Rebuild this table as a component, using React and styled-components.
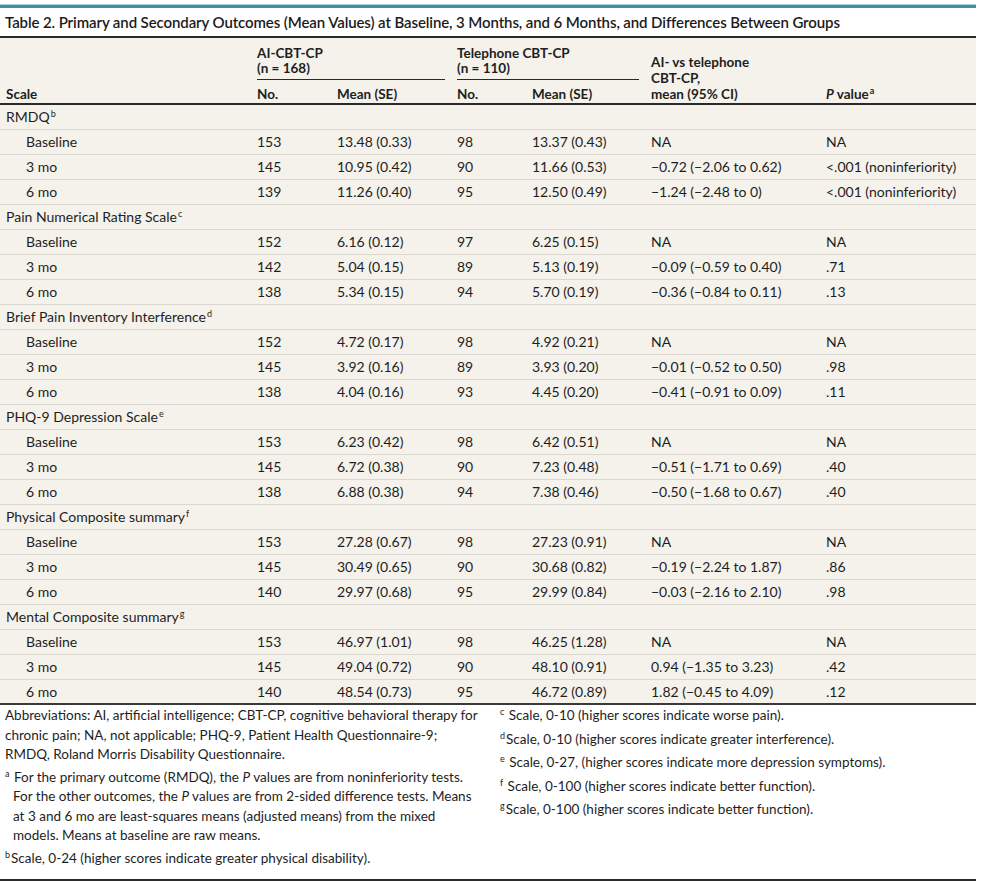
import React from "react";
import styled, { createGlobalStyle } from "styled-components";

const GlobalStyle = createGlobalStyle`
  body {
    margin: 0;
    background: #ffffff;
    font-family: Lato, "Open Sans", sans-serif;
    color: #1e1e1e;
  }
`;

const Page = styled.div`
  width: 976px;
  padding-top: 4px;
`;

const TopRule = styled.div`
  height: 3px;
  background: #3f8fa9;
  border-top: 1px solid #a8d3e0;
`;

const Title = styled.h2`
  margin: 0;
  padding: 5px 5px 0;
  height: 23px;
  font-size: 15px;
  font-weight: 600;
  letter-spacing: -0.1px;
  color: #1b1b1b;
  border-bottom: 2px solid #2a2a2a;
`;

const Table = styled.table`
  width: 976px;
  border-collapse: collapse;
  table-layout: fixed;
  background: #f4f2eb;
  font-size: 14px;
`;

const HeadCell = styled.th`
  text-align: left;
  vertical-align: bottom;
  font-weight: 700;
  font-size: 13.5px;
  line-height: 16px;
  padding: 0 6px 1px;
  color: #1e1e1e;
`;

const SpanHead = styled(HeadCell)`
  padding: 8px 0 0 6px;
  vertical-align: top;
  line-height: 15px;
  & > div {
    border-bottom: 1px solid #2a2a2a;
    padding-bottom: 3px;
    width: ${(p) => p.$line}px;
  }
`;

const HeadRow = styled.tr`
  height: ${(p) => p.$h}px;
  border-bottom: ${(p) => (p.$last ? "2px solid #2a2a2a" : "none")};
`;

const Row = styled.tr`
  height: 25px;
  border-bottom: ${(p) => (p.$last ? "2px solid #3a3a3a" : "1px solid #d9d7d0")};
`;

const Cell = styled.td`
  padding: 0 6px;
  padding-left: ${(p) => (p.$indent ? "26px" : "6px")};
  white-space: nowrap;
  color: #1e1e1e;
`;

const Sup = styled.sup`
  font-size: 9px;
  line-height: 0;
  vertical-align: 5px;
  margin-left: 1px;
`;

const Notes = styled.div`
  display: grid;
  grid-template-columns: 495px 1fr;
  padding: 1px 5px 0;
  height: 173px;
  border-bottom: 2px solid #2a2a2a;
  font-size: 13.5px;
  line-height: 19.5px;
  color: #1e1e1e;
`;

const NoteCol = styled.div`
  display: flex;
  flex-direction: column;
  gap: ${(p) => p.$gap}px;
`;

const Note = styled.p`
  margin: 0;
  white-space: nowrap;
  padding-left: ${(p) => (p.$hang ? "8px" : "0")};
  text-indent: ${(p) => (p.$hang ? "-8px" : "0")};
`;

const NoteMark = styled.sup`
  font-size: 9px;
  line-height: 0;
  vertical-align: 5px;
  margin-right: 1px;
`;

const groups = [
  {
    name: "RMDQ",
    sup: "b",
    rows: [
      ["Baseline", "153", "13.48 (0.33)", "98", "13.37 (0.43)", "NA", "NA"],
      ["3 mo", "145", "10.95 (0.42)", "90", "11.66 (0.53)", "−0.72 (−2.06 to 0.62)", "<.001 (noninferiority)"],
      ["6 mo", "139", "11.26 (0.40)", "95", "12.50 (0.49)", "−1.24 (−2.48 to 0)", "<.001 (noninferiority)"],
    ],
  },
  {
    name: "Pain Numerical Rating Scale",
    sup: "c",
    rows: [
      ["Baseline", "152", "6.16 (0.12)", "97", "6.25 (0.15)", "NA", "NA"],
      ["3 mo", "142", "5.04 (0.15)", "89", "5.13 (0.19)", "−0.09 (−0.59 to 0.40)", ".71"],
      ["6 mo", "138", "5.34 (0.15)", "94", "5.70 (0.19)", "−0.36 (−0.84 to 0.11)", ".13"],
    ],
  },
  {
    name: "Brief Pain Inventory Interference",
    sup: "d",
    rows: [
      ["Baseline", "152", "4.72 (0.17)", "98", "4.92 (0.21)", "NA", "NA"],
      ["3 mo", "145", "3.92 (0.16)", "89", "3.93 (0.20)", "−0.01 (−0.52 to 0.50)", ".98"],
      ["6 mo", "138", "4.04 (0.16)", "93", "4.45 (0.20)", "−0.41 (−0.91 to 0.09)", ".11"],
    ],
  },
  {
    name: "PHQ-9 Depression Scale",
    sup: "e",
    rows: [
      ["Baseline", "153", "6.23 (0.42)", "98", "6.42 (0.51)", "NA", "NA"],
      ["3 mo", "145", "6.72 (0.38)", "90", "7.23 (0.48)", "−0.51 (−1.71 to 0.69)", ".40"],
      ["6 mo", "138", "6.88 (0.38)", "94", "7.38 (0.46)", "−0.50 (−1.68 to 0.67)", ".40"],
    ],
  },
  {
    name: "Physical Composite summary",
    sup: "f",
    rows: [
      ["Baseline", "153", "27.28 (0.67)", "98", "27.23 (0.91)", "NA", "NA"],
      ["3 mo", "145", "30.49 (0.65)", "90", "30.68 (0.82)", "−0.19 (−2.24 to 1.87)", ".86"],
      ["6 mo", "140", "29.97 (0.68)", "95", "29.99 (0.84)", "−0.03 (−2.16 to 2.10)", ".98"],
    ],
  },
  {
    name: "Mental Composite summary",
    sup: "g",
    rows: [
      ["Baseline", "153", "46.97 (1.01)", "98", "46.25 (1.28)", "NA", "NA"],
      ["3 mo", "145", "49.04 (0.72)", "90", "48.10 (0.91)", "0.94 (−1.35 to 3.23)", ".42"],
      ["6 mo", "140", "48.54 (0.73)", "95", "46.72 (0.89)", "1.82 (−0.45 to 4.09)", ".12"],
    ],
  },
];

const widths = [251, 80, 120, 75, 119, 175, 156];

export default function App() {
  return (
    <Page>
      <GlobalStyle />
      <TopRule />
      <Title>
        Table 2. Primary and Secondary Outcomes (Mean Values) at Baseline, 3 Months, and 6 Months, and Differences Between Groups
      </Title>
      <Table>
        <colgroup>
          {widths.map((w, i) => (
            <col key={i} style={{ width: w }} />
          ))}
        </colgroup>
        <thead>
          <HeadRow $h={45}>
            <HeadCell rowSpan={2}>Scale</HeadCell>
            <SpanHead colSpan={2} $line={188}>
              <div>
                AI-CBT-CP
                <br />
                (n = 168)
              </div>
            </SpanHead>
            <SpanHead colSpan={2} $line={182}>
              <div>
                Telephone CBT-CP
                <br />
                (n = 110)
              </div>
            </SpanHead>
            <HeadCell rowSpan={2}>
              AI- vs telephone
              <br />
              CBT-CP,
              <br />
              mean (95% CI)
            </HeadCell>
            <HeadCell rowSpan={2}>
              <i>P</i> value<Sup>a</Sup>
            </HeadCell>
          </HeadRow>
          <HeadRow $h={21} $last>
            <HeadCell>No.</HeadCell>
            <HeadCell>Mean (SE)</HeadCell>
            <HeadCell>No.</HeadCell>
            <HeadCell>Mean (SE)</HeadCell>
          </HeadRow>
        </thead>
        <tbody>
          {groups.map((g, gi) => (
            <React.Fragment key={g.name}>
              <Row>
                <Cell colSpan={7}>
                  {g.name}
                  <Sup>{g.sup}</Sup>
                </Cell>
              </Row>
              {g.rows.map((r, ri) => (
                <Row key={r[0]} $last={gi === groups.length - 1 && ri === g.rows.length - 1}>
                  {r.map((v, ci) => (
                    <Cell key={ci} $indent={ci === 0}>
                      {v}
                    </Cell>
                  ))}
                </Row>
              ))}
            </React.Fragment>
          ))}
        </tbody>
      </Table>
      <Notes>
        <NoteCol $gap={3}>
          <Note>
            Abbreviations: AI, artificial intelligence; CBT-CP, cognitive behavioral therapy for
            <br />
            chronic pain; NA, not applicable; PHQ-9, Patient Health Questionnaire-9;
            <br />
            RMDQ, Roland Morris Disability Questionnaire.
          </Note>
          <Note $hang>
            <NoteMark>a</NoteMark> For the primary outcome (RMDQ), the <i>P</i> values are from noninferiority tests.
            <br />
            For the other outcomes, the <i>P</i> values are from 2-sided difference tests. Means
            <br />
            at 3 and 6 mo are least-squares means (adjusted means) from the mixed
            <br />
            models. Means at baseline are raw means.
          </Note>
          <Note $hang>
            <NoteMark>b</NoteMark>Scale, 0-24 (higher scores indicate greater physical disability).
          </Note>
        </NoteCol>
        <NoteCol $gap={4}>
          <Note>
            <NoteMark>c</NoteMark> Scale, 0-10 (higher scores indicate worse pain).
          </Note>
          <Note>
            <NoteMark>d</NoteMark>Scale, 0-10 (higher scores indicate greater interference).
          </Note>
          <Note>
            <NoteMark>e</NoteMark> Scale, 0-27, (higher scores indicate more depression symptoms).
          </Note>
          <Note>
            <NoteMark>f</NoteMark> Scale, 0-100 (higher scores indicate better function).
          </Note>
          <Note>
            <NoteMark>g</NoteMark>Scale, 0-100 (higher scores indicate better function).
          </Note>
        </NoteCol>
      </Notes>
    </Page>
  );
}
